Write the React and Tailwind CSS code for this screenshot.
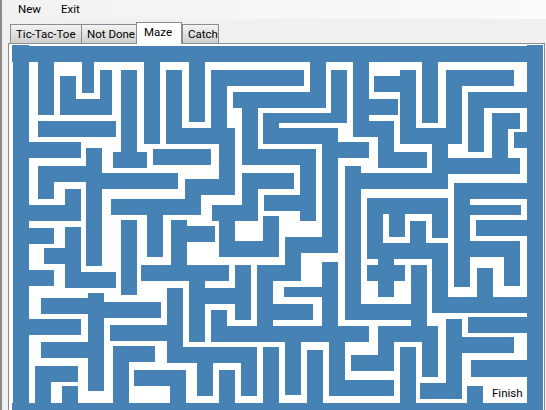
import React from 'react';

// maze walls, [x, y, w, h] in page pixels
const walls = [
  // outer frame
  [12, 44, 17, 17], [12, 45, 531, 16], [13, 61, 16, 345], [527, 44, 16, 362], [12, 402, 531, 8],
  // top left
  [38, 61, 16, 53], [60, 98, 52, 16], [60, 75, 16, 39], [82, 61, 12, 31], [100, 69, 12, 45],
  [38, 120, 78, 16], [121, 69, 16, 82], [113, 151, 34, 16], [144, 61, 16, 82],
  [166, 69, 16, 74], [166, 127, 69, 16], [219, 127, 16, 67], [185, 178, 50, 16],
  [189, 61, 16, 60], [211, 69, 16, 58], [211, 69, 93, 16],
  // top middle
  [233, 91, 93, 16], [310, 61, 16, 46], [242, 107, 16, 57], [242, 148, 74, 16], [300, 148, 16, 72],
  [263, 112, 84, 10], [263, 112, 16, 31], [263, 127, 75, 16], [331, 69, 16, 53],
  [322, 127, 16, 125], [338, 141, 31, 16], [242, 172, 52, 16], [242, 172, 16, 48],
  [212, 204, 46, 16], [264, 194, 52, 16], [219, 204, 16, 52], [219, 240, 60, 16], [263, 215, 16, 41],
  [285, 236, 53, 16], [285, 236, 16, 44], [257, 264, 44, 16],
  // top right
  [353, 61, 16, 75], [353, 120, 41, 16], [369, 98, 29, 16], [374, 75, 26, 16], [378, 120, 16, 47],
  [378, 151, 49, 16], [400, 69, 16, 74], [400, 127, 62, 16], [422, 61, 16, 61], [446, 69, 16, 74],
  [446, 69, 68, 16], [468, 91, 59, 16], [468, 91, 16, 60], [492, 112, 28, 16], [492, 112, 16, 45],
  [514, 131, 13, 16], [432, 135, 16, 38], [448, 157, 72, 16], [345, 165, 16, 154], [345, 172, 103, 16],
  // middle right
  [454, 182, 16, 104], [454, 182, 73, 16], [470, 204, 51, 10], [476, 219, 51, 16], [470, 240, 50, 16],
  [504, 240, 16, 45], [367, 197, 81, 16], [367, 197, 16, 61], [389, 213, 16, 23], [432, 213, 16, 24],
  [410, 220, 16, 38], [367, 242, 81, 16], [432, 242, 16, 70], [378, 258, 16, 38], [367, 264, 38, 16],
  [411, 264, 16, 75], [477, 267, 16, 29], [432, 296, 95, 16], [345, 303, 66, 16],
  // middle left
  [29, 141, 52, 16], [86, 147, 16, 118], [38, 165, 64, 16], [38, 165, 16, 33], [102, 172, 76, 16],
  [153, 148, 58, 16], [111, 198, 90, 16], [185, 178, 16, 36], [147, 214, 16, 42], [171, 219, 16, 45],
  [187, 225, 28, 16], [121, 219, 16, 75], [141, 264, 88, 16], [65, 188, 16, 32], [29, 204, 52, 16],
  [29, 227, 25, 16], [65, 226, 16, 61], [44, 247, 37, 16], [29, 269, 25, 16], [65, 271, 51, 16],
  // bottom left
  [41, 297, 63, 16], [88, 292, 16, 98], [104, 301, 57, 16], [29, 318, 52, 16], [41, 341, 47, 16],
  [35, 365, 43, 16], [35, 365, 16, 37], [62, 385, 16, 17], [113, 345, 16, 57], [113, 345, 42, 16],
  [134, 369, 52, 16], [170, 369, 16, 33], [167, 287, 16, 75], [110, 324, 57, 16], [167, 346, 90, 16],
  [197, 362, 16, 33], [189, 264, 16, 77], [205, 287, 30, 16],
  // bottom middle
  [211, 309, 16, 32], [211, 325, 158, 16], [235, 264, 16, 55], [257, 264, 16, 61], [273, 303, 40, 16],
  [284, 286, 38, 10], [322, 261, 16, 64], [241, 346, 16, 49], [219, 369, 16, 33], [263, 346, 16, 56],
  [285, 341, 16, 53], [307, 349, 16, 53], [329, 341, 16, 54], [329, 379, 65, 16],
  // bottom right
  [378, 325, 60, 16], [378, 325, 16, 45], [351, 354, 43, 16], [422, 325, 16, 51], [400, 346, 16, 56],
  [446, 318, 16, 80], [420, 382, 42, 16], [462, 336, 52, 16], [468, 316, 59, 16], [471, 359, 56, 17],
  [467, 385, 16, 17],
];

const tabs = [
  { label: 'Tic-Tac-Toe', w: 'w-[72px]' },
  { label: 'Not Done', w: 'w-[57px]' },
  { label: 'Maze', w: 'w-[46px]', active: true },
  { label: 'Catch', w: 'w-[37px]' },
];

export default function App() {
  return (
    <div className="w-[546px] h-[410px] overflow-hidden bg-[#f0f0f0] border-l-2 border-[#8a8a8a] text-[11.5px] text-black whitespace-nowrap font-['Roboto',sans-serif]">
      {/* menu */}
      <div className="h-[19px] flex items-center pl-[16px] gap-[20px] bg-gradient-to-r from-[#f1f1f1] to-[#fbfbfb] leading-none">
        <span>New</span>
        <span>Exit</span>
      </div>

      {/* tabs */}
      <div className="h-[24px] flex items-end pl-[8px]">
        {tabs.map(t => t.active ? (
          <div key={t.label} className={`${t.w} h-[22px] -mb-px -ml-px z-10 relative bg-white border border-b-0 border-[#898c95] pl-[7px] leading-[18px]`}>
            {t.label}
          </div>
        ) : (
          <div key={t.label} className={`${t.w} h-[19px] -mr-px bg-gradient-to-b from-[#f3f3f3] to-[#cfcfcf] border border-b-0 border-[#898c95] pl-[5px] leading-[18px]`}>
            {t.label}
          </div>
        ))}
      </div>

      {/* maze panel */}
      <div className="relative ml-[6px] w-[537px] h-[369px] bg-white border border-[#898c95]">
        <svg width="536" height="367" viewBox="9 43 536 367" className="block">
          {walls.map(([x, y, w, h], i) => (
            <rect key={i} x={x} y={y} width={w} height={h} fill="#4682b4" />
          ))}
        </svg>
        <span className="absolute left-[483px] top-[341px] leading-[16px]">Finish</span>
      </div>
    </div>
  );
}
